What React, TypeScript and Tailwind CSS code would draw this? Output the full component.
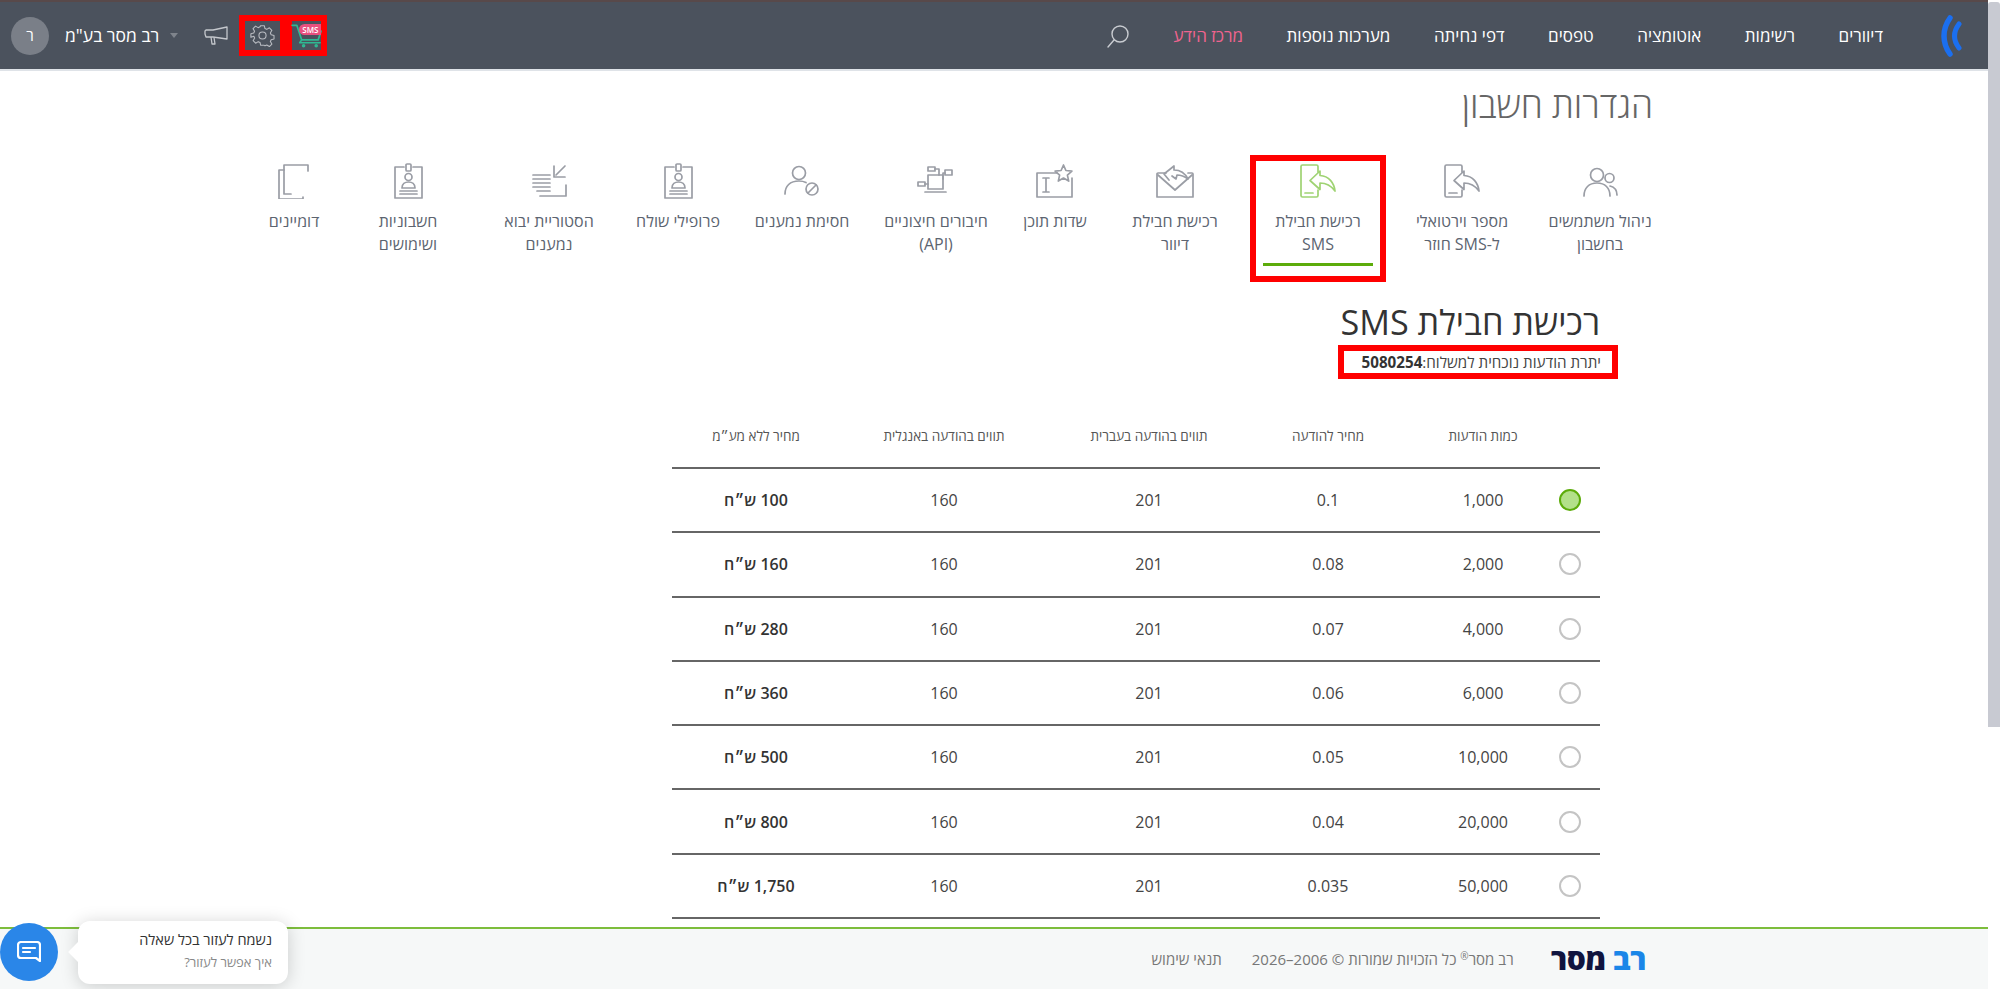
import React from 'react';

const FONT = { fontFamily: '"Open Sans", "Noto Sans", "Liberation Sans", sans-serif' };

const navItems = ['דיוורים', 'רשימות', 'אוטומציה', 'טפסים', 'דפי נחיתה', 'מערכות נוספות'];

// stroke icons share one wrapper, 38x36 box
const Ico: React.FC<{ children: React.ReactNode; active?: boolean }> = ({ children, active }) => (
  <svg
    width="38"
    height="36"
    viewBox="0 0 38 36"
    fill="none"
    stroke={active ? '#9fd373' : '#9a9da5'}
    strokeWidth="1.7"
    strokeLinecap="round"
    strokeLinejoin="round"
  >
    {children}
  </svg>
);

const PhoneReply = () => (
  <>
    <path d="M19 9V3.5a1.5 1.5 0 0 0-1.5-1.5h-14A1.5 1.5 0 0 0 2 3.5v29A1.5 1.5 0 0 0 3.500 34h14a1.500 1.500 0 0 0 1.500-1.500V27" />
    <path d="M6 30h8" />
    <path d="M21 8l-10 9.500 10 9v-6.500c6 0 11 2.500 15 8-1-8-6-15-15-15.500z" />
  </>
);

const IdCard = () => (
  <>
    <path d="M15 4H6v31h27V4h-9" />
    <rect x="17" y="1" width="5" height="7" rx="1" />
    <circle cx="19.500" cy="14" r="3.500" />
    <path d="M13 25c0-4 3-6 6.500-6s6.500 2 6.500 6z" />
    <path d="M11 28h17M11 31h17" />
  </>
);

const tabs: { lines: string[]; w: string; icon: React.ReactNode; active?: boolean }[] = [
  {
    lines: ['ניהול משתמשים', 'בחשבון'],
    w: 'w-[124px]',
    icon: (
      <>
        <circle cx="16" cy="12" r="6.500" />
        <path d="M3 33c0-8 5-13 13-13s13 5 13 13" />
        <circle cx="28.500" cy="15" r="4.500" />
        <path d="M29 23c4 1 7 4 7 9" />
      </>
    ),
  },
  { lines: ['מספר וירטואלי', 'ל-SMS חוזר'], w: 'w-[152px]', icon: <PhoneReply /> },
  { lines: ['רכישת חבילת', 'SMS'], w: 'w-[136px]', icon: <PhoneReply />, active: true },
  {
    lines: ['רכישת חבילת', 'דיוור'],
    w: 'w-[150px]',
    icon: (
      <>
        <path d="M10 10H2a1 1 0 0 0-1 1v23h36V11a1 1 0 0 0-1-1h-4" />
        <path d="M2 12l17 15 17-15" />
        <path d="M13 17l-5-6 10-8v4c6 0 11 3 14 9-4-3-8-4-11-4l-1 4-4-3" />
      </>
    ),
  },
  {
    lines: ['שדות תוכן'],
    w: 'w-[90px]',
    icon: (
      <>
        <path d="M21 10H1v24h35V15" />
        <path d="M27.500 2l2.400 5.500 6 .6-4.500 4 1.300 6-5.200-3.100-5.200 3.100 1.300-6-4.500-4 6-.6z" />
        <path d="M7 15h6M7 29h6M10 15v14" />
      </>
    ),
  },
  {
    lines: ['חיבורים חיצוניים', '(API)'],
    w: 'w-[148px]',
    icon: (
      <>
        <rect x="11" y="12" width="15" height="14" />
        <path d="M8 29h21" />
        <rect x="11" y="4" width="7" height="4" />
        <rect x="28" y="7" width="7" height="5" />
        <rect x="1" y="19" width="7" height="4" />
        <path d="M18 6h4v6M28 10h-2v6M8 21h3" />
      </>
    ),
  },
  {
    lines: ['חסימת נמענים'],
    w: 'w-[120px]',
    icon: (
      <>
        <circle cx="16" cy="10" r="6.500" />
        <path d="M2 31c0-8 5-13 14-13 3 0 5 .5 7 1.500" />
        <circle cx="29" cy="26" r="6" />
        <path d="M25 30l8-8" />
      </>
    ),
  },
  { lines: ['פרופילי שולח'], w: 'w-[128px]', icon: <IdCard /> },
  {
    lines: ['הסטוריית יבוא', 'נמענים'],
    w: 'w-[130px]',
    icon: (
      <>
        <path d="M3 12h17M3 16h17M3 20h17M3 24h17M7 28h13" />
        <path d="M36 22v11H10" />
        <path d="M35 3L26 12M24 3v11h11" />
      </>
    ),
  },
  { lines: ['חשבוניות', 'ושימושים'], w: 'w-[152px]', icon: <IdCard /> },
  {
    lines: ['דומיינים'],
    w: 'w-[76px]',
    icon: (
      <>
        <path d="M33 8V2H9v29h7" />
        <path d="M9 7H4v29h24v-2" />
      </>
    ),
  },
];

const rows = [
  ['1,000', '0.1', '100 ש״ח'],
  ['2,000', '0.08', '160 ש״ח'],
  ['4,000', '0.07', '280 ש״ח'],
  ['6,000', '0.06', '360 ש״ח'],
  ['10,000', '0.05', '500 ש״ח'],
  ['20,000', '0.04', '800 ש״ח'],
  ['50,000', '0.035', '1,750 ש״ח'],
];

const GRID = 'grid grid-cols-[60px_114px_196px_162px_248px_148px] items-center text-center';

const Header = () => (
  <header className="h-[71px] shrink-0 bg-[#4b525d] border-t-2 border-t-[#58494a] border-b-2 border-b-[#dfe3e8] flex items-center justify-between pl-[11px] pr-[26px]">
    <div className="flex items-center">
      <svg width="21" height="42" viewBox="0 0 21 42" fill="none" stroke="#1b6ff0" strokeLinecap="round" className="ml-[58px]">
        <path d="M9 3C1 14 1 28 9 39" strokeWidth="5.500" />
        <path d="M18 9C12 17 12 25 18 33" strokeWidth="5" />
      </svg>
      <nav className="flex items-center gap-[43.500px] text-[17px] text-white">
        {navItems.map((item) => (
          <a key={item} className="whitespace-nowrap">
            {item}
          </a>
        ))}
        <a className="whitespace-nowrap text-[#f0648f]">מרכז הידע</a>
        <svg width="24" height="24" viewBox="0 0 24 24" fill="none" stroke="#c9ccd1" strokeWidth="1.400" strokeLinecap="round">
          <circle cx="14" cy="10" r="8" />
          <path d="M8 16l-6 7" />
        </svg>
      </nav>
    </div>
    <div className="flex items-center">
      <div className="w-[41px] h-[41px] border-[6px] border-[#ff0000] flex items-center justify-center relative">
        <svg width="32" height="24" viewBox="0 0 33 24" fill="none" stroke="#2fb993" strokeWidth="1.700" strokeLinecap="round" strokeLinejoin="round" className="shrink-0">
          <path d="M1 1h5l5 15h17l3-9" />
          <path d="M11 16l-2 3h21" />
          <circle cx="13" cy="22" r="1" />
          <circle cx="26" cy="22" r="1" />
        </svg>
        <span className="absolute top-[3px] left-[7px] w-[22px] h-[11px] rounded-l-[6px] bg-[#e8507f] text-white text-[8px] font-semibold leading-[11px] text-center">
          SMS
        </span>
      </div>
      <div className="w-[47px] h-[41px] border-[6px] border-[#ff0000] flex items-center justify-center">
        <svg width="25" height="25" viewBox="-2 -2 28 28" fill="none" stroke="#b9bcc2" strokeWidth="1.200" strokeLinejoin="round" className="shrink-0">
          <circle cx="12" cy="12" r="4" />
          <path d="M10 1h4l.8 3.200 2 .9 2.900-1.700 2.800 2.800-1.700 2.900.9 2 3.200.8v4l-3.200.8-.9 2 1.700 2.900-2.800 2.800-2.900-1.700-2 .9L14 23h-4l-.8-3.200-2-.9-2.900 1.700-2.800-2.800 1.700-2.900-.9-2L-1 14v-4l3.200-.8.9-2-1.700-2.900 2.800-2.800 2.900 1.700 2-.9z" />
        </svg>
      </div>
      <svg width="24" height="19" viewBox="0 0 24 19" fill="none" stroke="#c4c7cc" strokeWidth="1.300" strokeLinejoin="round" className="mr-[11px]">
        <path d="M23 1v12L9 11H2L1 8V5l1-1h7z" />
        <path d="M7 11l1 7h3l-1-6.500" />
      </svg>
      <span className="mr-[26px] w-0 h-0 border-x-[4px] border-x-transparent border-t-[5px] border-t-[#7f848c]" />
      <span className="mr-[11px] text-[17.500px] text-white whitespace-nowrap">רב מסר בע"מ</span>
      <span className="mr-[16px] w-[38px] h-[38px] rounded-full bg-[#7a7f88] text-white text-[15px] flex items-center justify-center">ר</span>
    </div>
  </header>
);

const TabBar = () => (
  <div className="mt-[26px] mr-[326px] flex items-stretch">
    {tabs.map((t) => (
      <div
        key={t.lines[0] + t.w}
        className={`${t.w} h-[127px] shrink-0 flex flex-col items-center text-center text-[16px] leading-[23px] ${
          t.active ? 'border-[6px] border-[#ff0000] pt-[2px] text-[#5c6470]' : 'pt-[8px] text-[#5c6470]'
        }`}
      >
        <Ico active={t.active}>{t.icon}</Ico>
        <div className="mt-[11px] whitespace-nowrap">
          {t.lines.map((l) => (
            <div key={l}>{l}</div>
          ))}
        </div>
        {t.active && <div className="mt-auto mb-[10px] h-[3px] w-[110px] bg-[#5cac0a]" />}
      </div>
    ))}
  </div>
);

const PriceTable = () => (
  <div className="w-[928px] mt-[33px] mr-[388px] text-[#444]">
    <div className={`${GRID} h-[49px] pb-[6px] text-[13.500px] text-[#555] border-b-2 border-[#666] box-content`}>
      <div />
      <div>כמות הודעות</div>
      <div>מחיר להודעה</div>
      <div>תווים בהודעה בעברית</div>
      <div>תווים בהודעה באנגלית</div>
      <div className="pl-[20px]">מחיר ללא מע״מ</div>
    </div>
    {rows.map((r, i) => (
      <div key={r[0]} className={`${GRID} h-[64.300px] border-b-2 border-[#666] text-[16px]`}>
        <div className="flex justify-center">
          <span
            className={`block w-[22px] h-[22px] rounded-full border-2 ${
              i === 0 ? 'bg-[#b3e08a] border-[#5cac0a]' : 'bg-white border-[#c4c4c4]'
            }`}
          />
        </div>
        <div>{r[0]}</div>
        <div>{r[1]}</div>
        <div>201</div>
        <div>160</div>
        <div className="pl-[20px] font-semibold text-[#333]">{r[2]}</div>
      </div>
    ))}
  </div>
);

const Footer = () => (
  <footer className="h-[62px] shrink-0 bg-[#f6f8f8] border-t-2 border-[#7dbd3c] flex items-center pr-[342px] text-[15px] text-[#777]">
    <span className="text-[30px] leading-none font-extrabold whitespace-nowrap tracking-[-0.5px]">
      <span className="text-[#1a86e8]">רב</span> <span className="text-[#10143f]">מסר</span>
    </span>
    <span className="mr-[37px] whitespace-nowrap">
      רב מסר<sup className="text-[10px]">®</sup> כל הזכויות שמורות © 2006–2026
    </span>
    <a className="mr-[30px] whitespace-nowrap">תנאי שימוש</a>
  </footer>
);

const ChatWidget = () => (
  <>
    <div className="absolute left-0 top-[923px] w-[58px] h-[58px] rounded-full bg-[#2a86e8] flex items-center justify-center">
      <svg width="24" height="22" viewBox="0 0 24 22" fill="none" stroke="white" strokeWidth="2.200" strokeLinecap="round" strokeLinejoin="round">
        <path d="M4 1h16a3 3 0 0 1 3 3v16l-4-3H4a3 3 0 0 1-3-3V4a3 3 0 0 1 3-3z" />
        <path d="M6 7h12M6 11h7" />
      </svg>
    </div>
    <div className="absolute left-[78px] top-[921px] w-[210px] h-[63px] rounded-xl bg-white shadow-[0_2px_18px_rgba(0,0,0,0.18)] px-4 pt-[7px]">
      <div className="absolute left-[-7px] top-[24px] w-[14px] h-[14px] rotate-45 bg-white" />
      <div className="text-[14.500px] leading-[24px] text-[#333] whitespace-nowrap">נשמח לעזור בכל שאלה</div>
      <div className="text-[13px] leading-[20px] text-[#888] whitespace-nowrap">איך אפשר לעזור?</div>
    </div>
  </>
);

export default function App() {
  return (
    <div dir="rtl" style={FONT} className="relative flex h-screen w-full overflow-hidden bg-white">
      {/* scrollbar strip */}
      <div className="w-3 shrink-0 pt-[2px]">
        <div className="h-[725px] rounded-t-[3px] bg-[#c8cad2]" />
      </div>
      <div className="flex-1 min-w-0 flex flex-col">
        <Header />
        <main className="flex-1 min-h-0 overflow-hidden">
          <h1 className="mt-[8px] mr-[335px] text-[35.500px] leading-[50px] font-light text-[#666]">הגדרות חשבון</h1>
          <TabBar />
          <h2 className="mt-[17px] mr-[388px] text-[34.200px] leading-[46px] font-normal text-[#333]">רכישת חבילת SMS</h2>
          <div className="mr-[370px] w-[280px] h-[34px] border-[6px] border-[#ff0000] pr-[11px] flex items-center text-[15.200px] text-[#444] whitespace-nowrap">
            יתרת הודעות נוכחית למשלוח:<b className="text-[#333]">5080254</b>
          </div>
          <PriceTable />
        </main>
        <Footer />
      </div>
      <ChatWidget />
    </div>
  );
}
